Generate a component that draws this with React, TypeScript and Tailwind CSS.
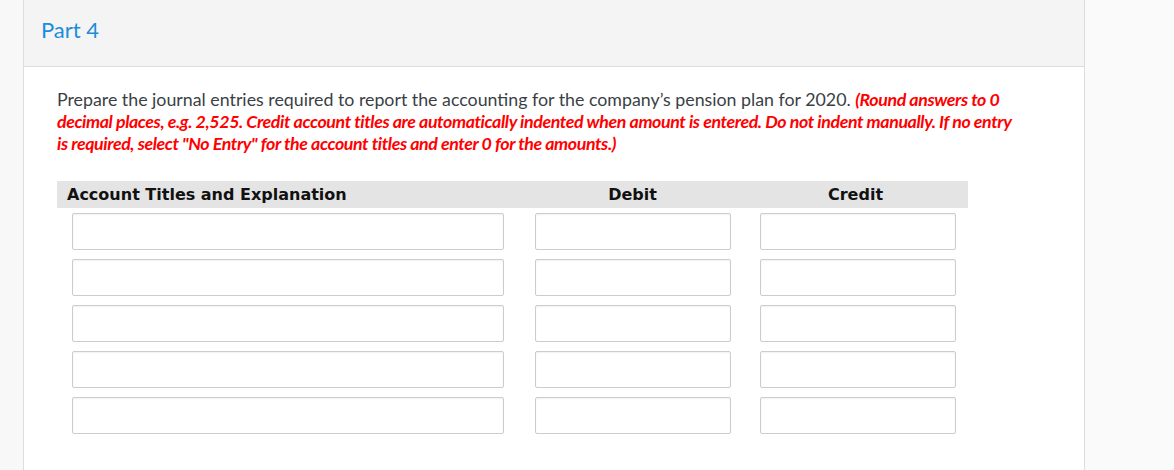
const rows = [0, 1, 2, 3, 4];

function Field({ width }: { width: string }) {
  return (
    <input
      type="text"
      className={`${width} h-[37px] rounded-[2px] border border-[#cccccc] bg-white shadow-[inset_0_1px_2px_rgba(0,0,0,0.06)] outline-none`}
    />
  );
}

export default function App() {
  return (
    <div className="flex h-[470px] w-[1174px] overflow-hidden bg-[#fafafa] font-['Lato','Liberation_Sans',sans-serif]">
      <div className="w-[23px] shrink-0 bg-[#f8f8f8]" />
      <div className="w-[1062px] shrink-0 border-x border-[#dddddd] bg-white">
        <div className="flex h-[67px] items-center border-b border-[#dddddd] bg-[#f4f4f4] pb-[8px] pl-[17px]">
          <h2 className="text-[22px] text-[#1a8ddb]">Part 4</h2>
        </div>

        <div className="px-[33px] pt-[21px]">
          <p className="w-[962px] text-[17.8px] leading-[22px] text-[#3a3f45]">
            Prepare the journal entries required to report the accounting for the company’s pension plan for 2020.{' '}
            <em className="font-bold tracking-[-0.4px] text-[#ff0000]">
              (Round answers to 0 decimal places, e.g. 2,525. Credit account titles are automatically indented when
              amount is entered. Do not indent manually. If no entry is required, select "No Entry" for the account
              titles and enter 0 for the amounts.)
            </em>
          </p>

          <div className="mt-[27px] w-[911px] font-['DejaVu_Sans','Verdana',sans-serif] text-[16px] font-bold text-[#111111]">
            <div className="grid h-[27px] grid-cols-[463px_225px_223px] items-center bg-[#e4e4e4]">
              <div className="pl-[10px]">Account Titles and Explanation</div>
              <div className="text-center">Debit</div>
              <div className="pr-[2px] text-center">Credit</div>
            </div>
            <div className="flex flex-col gap-[9px] pt-[5px]">
              {rows.map((r) => (
                <div key={r} className="grid grid-cols-[463px_225px_223px]">
                  <div className="pl-[15px]">
                    <Field width="w-[432px]" />
                  </div>
                  <div className="pl-[15px]">
                    <Field width="w-[196px]" />
                  </div>
                  <div className="pl-[15px]">
                    <Field width="w-[196px]" />
                  </div>
                </div>
              ))}
            </div>
          </div>
        </div>
      </div>
      <div className="flex-1 bg-[#fafafa]" />
    </div>
  );
}
